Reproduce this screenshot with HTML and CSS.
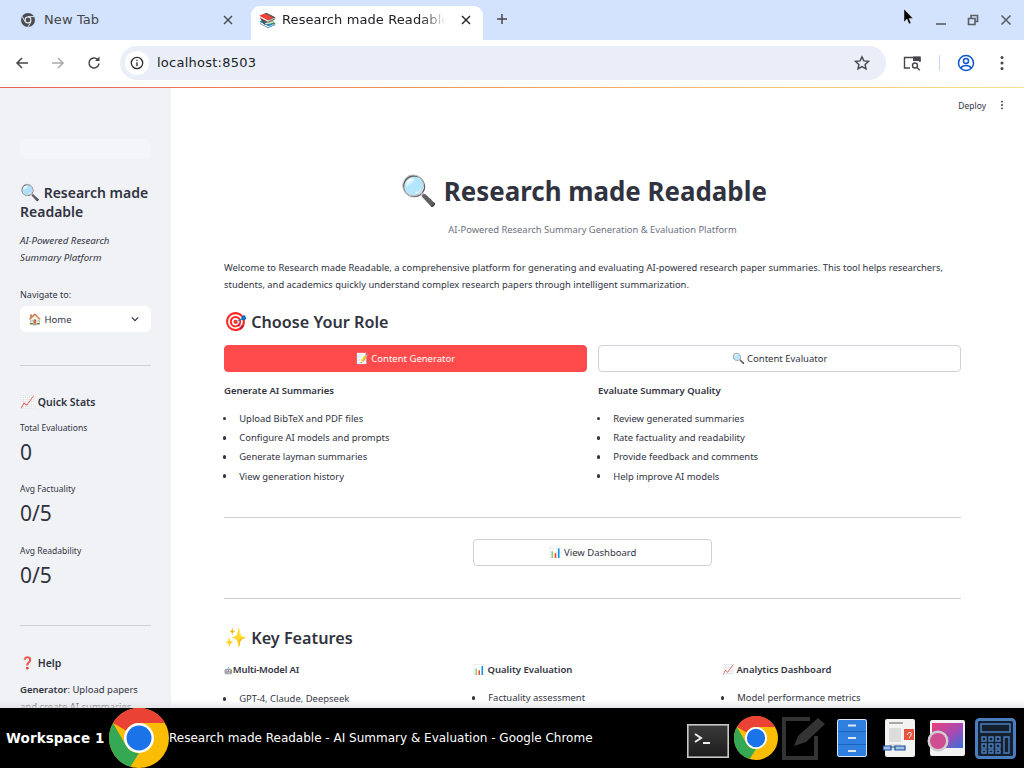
FILE: index.html
```html
<!DOCTYPE html>
<html lang="en">
<head>
<meta charset="utf-8">
<title>Research made Readable</title>
<link rel="stylesheet" href="styles.css">
</head>
<body>
<svg class="defs" width="0" height="0" aria-hidden="true">
  <symbol id="chrome" viewBox="0 0 48 48">
    <circle cx="24" cy="24" r="24" fill="#fbbc04"/>
    <path d="M24 0A24 24 0 0 1 44.800 12H24a12 12 0 0 0-10.400 6L3.200 12A24 24 0 0 1 24 0z" fill="#ea4335"/>
    <path d="M3.200 12l10.400 18a12 12 0 0 0 10.400 6l-6.900 11A24 24 0 0 1 3.200 12z" fill="#34a853"/>
    <circle cx="24" cy="24" r="12" fill="#fff"/>
    <circle cx="24" cy="24" r="10" fill="#1a73e8"/>
  </symbol>
</svg>

<header class="tabstrip">
  <div class="tab">
    <svg class="tab-fav" viewBox="0 0 16 16"><circle cx="8" cy="8" r="7" fill="#4a4d51"/><circle cx="8" cy="8" r="3.400" fill="#fff"/><circle cx="8" cy="8" r="2.400" fill="#4a4d51"/><path d="M8 4.600h6M5 9.700L2.200 4.400M11 9.700L8 15" stroke="#d3e3fd" stroke-width="1"/></svg>
    <span class="tab-title">New Tab</span>
    <svg class="tab-x" viewBox="0 0 10 10"><path d="M1 1l8 8M9 1l-8 8" stroke="#45474a" stroke-width="1.400"/></svg>
  </div>
  <div class="tab tab-active">
    <span class="tab-emoji">📚</span>
    <span class="tab-title tab-title-fade">Research made Readable</span>
    <svg class="tab-x" viewBox="0 0 10 10"><path d="M1 1l8 8M9 1l-8 8" stroke="#202124" stroke-width="1.400"/></svg>
  </div>
  <svg class="tab-new" viewBox="0 0 12 12"><path d="M6 1v10M1 6h10" stroke="#45474a" stroke-width="1.500"/></svg>
  <div class="wincontrols">
    <svg class="win" viewBox="0 0 12 12"><path d="M1 10h10" stroke="#5b5e63" stroke-width="1.600"/></svg>
    <svg class="win" viewBox="0 0 12 12"><path d="M1.500 4.500h6.500v6H1.500zM4 4.500V1.500h6.500v6H8" fill="none" stroke="#5b5e63" stroke-width="1.600"/></svg>
    <svg class="win" viewBox="0 0 12 12"><path d="M1.500 1.500l9 9M10.500 1.500l-9 9" stroke="#5b5e63" stroke-width="1.600"/></svg>
  </div>
  <svg class="cursor" viewBox="0 0 10 16"><path d="M0 0v13l3-3 2 5 2-1-2-4.600h4z" fill="#000" stroke="#fff" stroke-width=".4"/></svg>
</header>

<nav class="toolbar">
  <svg class="tool" viewBox="0 0 16 16"><path d="M14 8H3M8 3L3 8l5 5" fill="none" stroke="#45474a" stroke-width="1.500"/></svg>
  <svg class="tool" viewBox="0 0 16 16"><path d="M2 8h11M8 3l5 5-5 5" fill="none" stroke="#a9abae" stroke-width="1.500"/></svg>
  <svg class="tool" viewBox="0 0 16 16"><path d="M13 8.500A5 5 0 1 1 11.500 4.400" fill="none" stroke="#45474a" stroke-width="1.500"/><path d="M13.500 1.500v4.500H9z" fill="#45474a"/></svg>
  <div class="omnibox">
    <span class="omni-info"><svg viewBox="0 0 14 14"><circle cx="7" cy="7" r="5.700" fill="none" stroke="#2b2c2f" stroke-width="1.300"/><path d="M7 6.200v4M7 3.800v1.300" stroke="#2b2c2f" stroke-width="1.300"/></svg></span>
    <span class="omni-url">localhost:8503</span>
    <svg class="omni-star" viewBox="0 0 16 16"><path d="M8 1.800l1.900 4.100 4.500.5-3.300 3 .9 4.400L8 11.600l-4 2.200.9-4.400-3.300-3 4.500-.5z" fill="none" stroke="#45474a" stroke-width="1.400"/></svg>
  </div>
  <svg class="tool tool-media" viewBox="0 0 18 16"><path d="M7 13H1.500V2.500H17V7" fill="none" stroke="#45474a" stroke-width="1.400"/><path d="M10 1.500h7.500V6H10z" fill="#45474a"/><circle cx="12" cy="10.500" r="2.500" fill="none" stroke="#45474a" stroke-width="1.400"/><path d="M14 12.500l2.800 2.800" stroke="#45474a" stroke-width="1.400"/></svg>
  <span class="tool-sep"></span>
  <svg class="tool tool-profile" viewBox="0 0 18 18"><circle cx="9" cy="9" r="7.500" fill="none" stroke="#0b57d0" stroke-width="1.500"/><circle cx="9" cy="7" r="2.500" fill="none" stroke="#0b57d0" stroke-width="1.500"/><path d="M3.800 14c2-3.200 8.400-3.200 10.400 0" fill="none" stroke="#0b57d0" stroke-width="1.500"/></svg>
  <svg class="tool tool-menu" viewBox="0 0 4 16"><circle cx="2" cy="2.500" r="1.500" fill="#45474a"/><circle cx="2" cy="8" r="1.500" fill="#45474a"/><circle cx="2" cy="13.500" r="1.500" fill="#45474a"/></svg>
</nav>
<div class="decoration"></div>

<div class="app">
  <aside class="sidebar">
    <div class="side-ghost"></div>
    <h2 class="side-title"><span class="emo">🔍</span> Research made Readable</h2>
    <p class="side-tag">AI-Powered Research<br>Summary Platform</p>
    <label class="field-label">Navigate to:</label>
    <div class="select">
      <span><span class="emo">🏠</span> Home</span>
      <svg class="chev" viewBox="0 0 10 6"><path d="M1 1l4 4 4-4" fill="none" stroke="#31333f" stroke-width="1.500"/></svg>
    </div>
    <hr class="side-rule side-rule-a">
    <h3 class="side-head"><span class="emo">📈</span> Quick Stats</h3>
    <div class="metric"><div class="metric-label">Total Evaluations</div><div class="metric-value">0</div></div>
    <div class="metric"><div class="metric-label">Avg Factuality</div><div class="metric-value">0/5</div></div>
    <div class="metric"><div class="metric-label">Avg Readability</div><div class="metric-value">0/5</div></div>
    <hr class="side-rule side-rule-b">
    <h3 class="side-head side-help"><span class="emo">❓</span> Help</h3>
    <p class="side-text"><strong>Generator</strong>: Upload papers and create AI summaries</p>
  </aside>

  <main class="main">
    <div class="stbar">
      <span class="deploy">Deploy</span>
      <svg class="stmenu" viewBox="0 0 4 12"><circle cx="2" cy="2" r="1.100" fill="#31333f"/><circle cx="2" cy="6" r="1.100" fill="#31333f"/><circle cx="2" cy="10" r="1.100" fill="#31333f"/></svg>
    </div>
    <div class="content">
      <h1 class="hero"><span class="emo">🔍</span> Research made Readable</h1>
      <p class="subtitle">AI-Powered Research Summary Generation &amp; Evaluation Platform</p>
      <p class="intro">Welcome to Research made Readable, a comprehensive platform for generating and evaluating AI-powered research paper summaries. This tool helps researchers, students, and academics quickly understand complex research papers through intelligent summarization.</p>
      <h2 class="section"><span class="emo">🎯</span> Choose Your Role</h2>
      <div class="two-col">
        <div>
          <button class="btn btn-primary"><span class="emo">📝</span> Content Generator</button>
          <h4 class="col-head col-head-role">Generate AI Summaries</h4>
          <ul class="list">
            <li>Upload BibTeX and PDF files</li>
            <li>Configure AI models and prompts</li>
            <li>Generate layman summaries</li>
            <li>View generation history</li>
          </ul>
        </div>
        <div>
          <button class="btn"><span class="emo">🔍</span> Content Evaluator</button>
          <h4 class="col-head col-head-role">Evaluate Summary Quality</h4>
          <ul class="list">
            <li>Review generated summaries</li>
            <li>Rate factuality and readability</li>
            <li>Provide feedback and comments</li>
            <li>Help improve AI models</li>
          </ul>
        </div>
      </div>
      <hr class="rule rule-a">
      <div class="three-col">
        <span></span>
        <button class="btn"><span class="emo">📊</span> View Dashboard</button>
        <span></span>
      </div>
      <hr class="rule rule-b">
      <h2 class="section section-features"><span class="emo">✨</span> Key Features</h2>
      <div class="three-col">
        <div>
          <h4 class="col-head col-head-tight"><span class="robot">🤖</span>Multi-Model AI</h4>
          <ul class="list list-feature"><li>GPT-4, Claude, Deepseek</li></ul>
        </div>
        <div>
          <h4 class="col-head"><span class="emo">📊</span> Quality Evaluation</h4>
          <ul class="list list-feature"><li>Factuality assessment</li></ul>
        </div>
        <div>
          <h4 class="col-head"><span class="emo">📈</span> Analytics Dashboard</h4>
          <ul class="list list-feature"><li>Model performance metrics</li></ul>
        </div>
      </div>
    </div>
  </main>
  <div class="page-fade"></div>
</div>

<footer class="taskbar">
  <span class="workspace">Workspace 1</span>
  <svg class="task-chrome"><use href="#chrome"/></svg>
  <span class="task-title">Research made Readable - AI Summary &amp; Evaluation - Google Chrome</span>
  <div class="dock">
    <svg class="dock-terminal" viewBox="0 0 42 34"><defs><linearGradient id="term-grad" x1="0" y1="0" x2="0" y2="1"><stop offset="0" stop-color="#3a3a3a"/><stop offset="1" stop-color="#1c1c1c"/></linearGradient></defs><rect x=".8" y=".8" width="40.400" height="32.400" fill="url(#term-grad)" stroke="#c8c8c8" stroke-width="1.600"/><path d="M8 10l6 4-6 4" fill="none" stroke="#eee" stroke-width="2"/><path d="M16 19h7" stroke="#eee" stroke-width="2"/></svg>
    <svg class="dock-chrome"><use href="#chrome"/></svg>
    <svg class="dock-editor" viewBox="0 0 44 44"><path d="M28 3H2v39h32V20" fill="none" stroke="#333" stroke-width="4"/><path d="M12 30l4-10L36 2l7 6-19 18z" fill="#333"/></svg>
    <svg class="dock-files" viewBox="0 0 30 38"><rect width="30" height="38" rx="2" fill="#2f7fe0"/><path d="M0 12.500h30M0 25.500h30" stroke="#1f62b8"/><path d="M11 6.500h8M11 19h8M11 32h8" stroke="#dfe8f2" stroke-width="2"/><rect x=".5" y=".5" width="29" height="37" rx="2" fill="none" stroke="#dfe8f2"/></svg>
    <svg class="dock-doc" viewBox="0 0 32 38"><rect x="2" width="30" height="38" rx="2" fill="#f3f3f1"/><path d="M6 4h14" stroke="#777" stroke-width="1.200"/><path d="M6 9h12v14H6z" fill="#dcdcdc"/><path d="M21 10h10v11H21z" fill="#e8533f"/><path d="M24 16c2-4 5-3 4 0s-3 2-1 3" fill="none" stroke="#fff"/><path d="M6 26h12M6 30h10" stroke="#c6c6c6"/><path d="M0 27h8v4H0zM12 27h10v4H12z" fill="#9cc0e8" stroke="#1c4e9c" stroke-width="1.200"/><path d="M8 28h4" stroke="#1c4e9c"/></svg>
    <svg class="dock-image" viewBox="0 0 38 36"><defs><linearGradient id="img-grad" x1="0" y1="0" x2="1" y2="1"><stop offset="0" stop-color="#ef3f78"/><stop offset=".55" stop-color="#a24bb5"/><stop offset="1" stop-color="#3272db"/></linearGradient></defs><rect x="3" width="35" height="36" rx="2" fill="#f2f2f2"/><rect x="5" y="3" width="31" height="25" fill="url(#img-grad)"/><circle cx="11" cy="21" r="10.500" fill="#d0d0d0"/><circle cx="11" cy="21" r="8" fill="#cf4e92"/></svg>
    <svg class="dock-calc" viewBox="0 0 41 41"><rect x="1.500" y="1.500" width="38" height="38" rx="3" fill="#14202e" stroke="#4a7dbd" stroke-width="3"/><rect x="6" y="6" width="29" height="8" fill="none" stroke="#4a7dbd" stroke-width="1.500"/><path d="M7 19h4v4H7zM14 19h4v4h-4zM21 19h4v4h-4zM7 26h4v4H7zM14 26h4v4h-4zM21 26h4v4h-4zM7 32h4v3H7zM14 32h4v3h-4zM21 32h4v3h-4zM29 19h5v16h-5z" fill="none" stroke="#4a7dbd" stroke-width="1.400"/></svg>
  </div>
</footer>
</body>
</html>
```

FILE: styles.css
```css
* { box-sizing: border-box; }
html, body { margin: 0; height: 100%; overflow: hidden; }
body {
  width: 1024px; height: 768px;
  display: flex; flex-direction: column;
  font-family: "Noto Sans", "Liberation Sans", sans-serif;
  color: #31333f; background: #fff;
}
.defs { position: absolute; }
.emo { font-size: 1.16em; line-height: 1; }
.robot { font-family: "DejaVu Sans", sans-serif; font-size: 7px; font-weight: 400; }

/* tab strip */
.tabstrip {
  height: 40px; flex: none; background: #d3e3fd;
  display: flex; align-items: flex-end; padding-left: 8px; position: relative;
  font-family: "DejaVu Sans", sans-serif; font-size: 13px;
}
.tab { width: 242px; height: 34px; display: flex; align-items: center; padding: 0 12px 7px 12px; color: #45474a; }
.tab-active { width: 232px; background: #fff; border-radius: 9px 9px 0 0; color: #202124; padding-left: 8px; padding-right: 7px; margin-left: 1px; }
.tab-fav { width: 16px; height: 16px; flex: none; margin-right: 8px; }
.tab-emoji { width: 16px; flex: none; margin-right: 7px; font-size: 14px; line-height: 16px; }
.tab-title { flex: 1; white-space: nowrap; overflow: hidden; letter-spacing: .1px; }
.tab-title-fade { -webkit-mask-image: linear-gradient(90deg, #000 85%, transparent 100%); mask-image: linear-gradient(90deg, #000 85%, transparent 100%); }
.tab-x { width: 10px; height: 10px; flex: none; margin: 0 5px 0 8px; }
.tab-active .tab-x { margin-left: 15px; }
.tab-new { width: 12px; height: 12px; margin: 0 0 15px 13px; flex: none; }
.wincontrols { margin-left: auto; display: flex; gap: 21px; align-items: center; height: 40px; padding-right: 12px; }
.win { width: 12px; height: 12px; }
.win:first-child { margin-right: -1px; }
.cursor { position: absolute; left: 904px; top: 9px; width: 10px; height: 16px; }

/* toolbar */
.toolbar {
  height: 47px; flex: none; background: #fff; display: flex; align-items: center;
  padding: 0 14px 2px; border-radius: 8px 8px 0 0;
  font-family: "DejaVu Sans", sans-serif;
}
.tool { width: 16px; height: 16px; flex: none; margin-right: 20px; }
.omnibox {
  width: 766px; height: 34px; margin-left: -2px; background: #e9eef8; border-radius: 17px; flex: none;
  display: flex; align-items: center; padding: 0 16px 0 5px;
}
.omni-info { width: 24px; height: 24px; border-radius: 50%; background: #fff; display: flex; align-items: center; justify-content: center; }
.omni-info svg { width: 14px; height: 14px; }
.omni-url { margin-left: 8px; font-size: 13px; color: #202124; letter-spacing: .25px; }
.omni-star { width: 16px; height: 16px; margin-left: auto; }
.tool-media { width: 18px; margin: 0 0 0 17px; }
.tool-sep { width: 1px; height: 16px; background: #c4d7f5; margin: 0 17px 0 18px; flex: none; }
.tool-profile { width: 18px; height: 18px; margin: 0 25px 0 0; }
.tool-menu { width: 4px; margin: 0; }
.decoration { height: 1px; flex: none; background: linear-gradient(90deg, #e8605a, #f0a060 50%, #f5e58a); }

/* app */
.app { flex: 1; min-height: 0; display: flex; position: relative; overflow: hidden; }
.sidebar { width: 171px; flex: none; background: #f0f2f6; padding: 51px 20px 0; }
.side-ghost { height: 20px; border-radius: 6px; background: #f3f5f9; }
.side-title { margin: 24px 0 0; font-size: 14px; line-height: 19px; font-weight: 600; }
.side-title .emo { font-size: 16px; }
.side-tag { margin: 11px 0 0; font-size: 9.700px; line-height: 17px; font-style: italic; }
.field-label { display: block; margin-top: 22px; font-size: 9px; line-height: 14px; }
.select {
  height: 26px; margin-top: 4px; background: #fff; border-radius: 6px;
  display: flex; align-items: center; justify-content: space-between; padding: 0 12px 0 8px;
  font-size: 9.500px;
}
.chev { width: 8px; height: 6px; }
.side-rule { border: 0; border-top: 1px solid #cfd1d6; margin: 0; }
.side-rule-a { margin-top: 33px; }
.side-head { margin: 28px 0 0; font-size: 10.500px; line-height: 16px; font-weight: 600; }
.side-head .emo { font-size: 12px; }
.metric { margin-top: 10.700px; height: 53px; }
.metric + .metric { margin-top: 8.500px; }
.metric-label { font-size: 8.500px; line-height: 14px; }
.metric-value { font-size: 21px; line-height: 34px; }
.side-rule-b { margin-top: 28.300px; }
.side-help { margin-top: 29px; }
.side-text { margin: 10px 0 0; font-size: 9.500px; line-height: 17px; }
.side-text strong { font-weight: 600; }

/* main */
.main { flex: 1; min-width: 0; }
.stbar { height: 34px; display: flex; align-items: center; justify-content: flex-end; padding: 0 20px 0 0; }
.deploy { font-size: 8.500px; margin-right: 14px; }
.stmenu { width: 4px; height: 10px; }
.content { padding: 0 63px 0 53px; }
.hero { margin: 50px 0 0; padding-right: 18px; text-align: center; font-size: 25.900px; line-height: 38px; font-weight: 700; }
.hero .emo { font-size: 30px; }
.subtitle { margin: 12px 0 0; text-align: center; font-size: 9.400px; line-height: 16px; color: #6b7080; }
.intro { margin: 21px 0 0; font-size: 9.400px; line-height: 17px; }
.section { margin: 17px 0 0; font-size: 16.200px; line-height: 24px; font-weight: 600; }
.section .emo { font-size: 18.500px; }
.two-col { display: grid; grid-template-columns: 1fr 1fr; gap: 11px; margin-top: 11px; }
.three-col { display: grid; grid-template-columns: repeat(3, 239px); gap: 10px; }
.btn {
  display: block; width: 100%; height: 27px; border-radius: 4px; border: 1px solid #d0d2d7;
  background: #fff; color: #31333f; font-family: inherit; font-size: 9.500px; padding: 0;
}
.btn-primary { background: #ff4b4b; border-color: #ff4b4b; color: #fff; }
.btn .emo { font-size: 1.100em; }
.col-head { margin: 0; font-size: 9.500px; line-height: 16px; font-weight: 600; }
.col-head .emo { font-size: 1.050em; }
.col-head-tight { letter-spacing: -.15px; }
.col-head-role { margin-top: 11px; }
.list { margin: 10px 0 0; padding: 0; list-style: none; font-size: 9.450px; line-height: 19.200px; }
.list li { display: flex; align-items: center; }
.list li::before { content: ""; flex: none; width: 3.500px; height: 3.500px; border-radius: 50%; background: #31333f; margin: 0 13px 0 -1.300px; }
.rule { border: 0; border-top: 1px solid #cfd1d6; margin: 0; }
.rule-a { margin-top: 31.400px; margin-bottom: 21px; }
.rule-b { margin-top: 32px; }
.section-features { margin-top: 27px; }
.section-features + .three-col { margin-top: 12px; }
.list-feature { margin-top: 10px; }
.page-fade { position: absolute; left: 0; right: 0; bottom: 0; height: 8px; background: linear-gradient(180deg, rgba(255,255,255,0), rgba(225,225,228,.8)); pointer-events: none; }

/* taskbar */
.taskbar { height: 60px; flex: none; background: #000; display: flex; align-items: center; color: #fff; font-family: "DejaVu Sans", sans-serif; padding-left: 6px; }
.workspace { font-size: 13.500px; font-weight: 700; letter-spacing: .1px; white-space: nowrap; width: 103px; }
.task-chrome { width: 60px; height: 60px; flex: none; }
.task-title { font-size: 12px; white-space: nowrap; }
.dock { margin-left: auto; display: flex; align-items: center; padding-right: 8px; }
.dock-terminal { width: 42px; height: 34px; margin-top: 6px; }
.dock-chrome { width: 44px; height: 44px; margin-left: 5px; }
.dock-editor { width: 44px; height: 44px; margin-left: 4px; }
.dock-files { width: 30px; height: 38px; margin-left: 11px; }
.dock-doc { width: 32px; height: 38px; margin-left: 16px; }
.dock-image { width: 38px; height: 36px; margin-left: 12px; }
.dock-calc { width: 41px; height: 41px; margin-left: 10px; }
```
